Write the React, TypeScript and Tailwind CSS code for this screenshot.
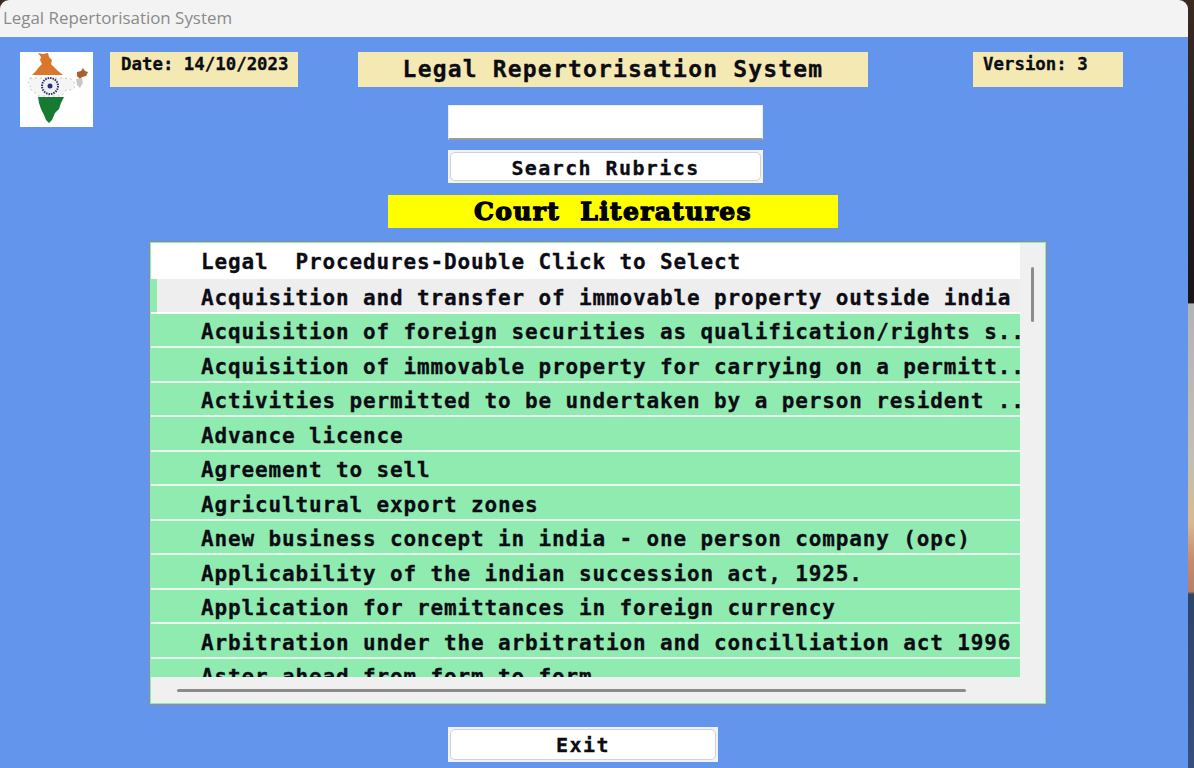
const rows = [
  "Acquisition of foreign securities as qualification/rights s..",
  "Acquisition of immovable property for carrying on a permitt..",
  "Activities permitted to be undertaken by a person resident ..",
  "Advance licence",
  "Agreement to sell",
  "Agricultural export zones",
  "Anew business concept in india - one person company (opc)",
  "Applicability of the indian succession act, 1925.",
  "Application for remittances in foreign currency",
  "Arbitration under the arbitration and concilliation act 1996",
  "Aster ahead from form to form",
];

const mono = "font-['DejaVu_Sans_Mono',monospace] font-bold text-[#0c0c14] whitespace-pre [-webkit-text-stroke:0.3px_#0c0c14]";

function IndiaLogo() {
  return (
    <div className="w-[73px] h-[75px] bg-white shrink-0">
      <svg width="73" height="75" viewBox="0 0 73 75" className="blur-[0.5px]">
        {/* north, saffron */}
        <path d="M18 1l5 1 5-1 1 4 3 3-1 4 3 3 4 4 5 4H12l4-4 3-4 3-3-2-4 1-3z" fill="#d9772a" />
        <path d="M57 20l4-1 2-3 2 3 3 1-2 4-4 1-2 2-3-3z" fill="#a8602f" />
        {/* middle, white with grey speckle */}
        <path d="M10 26h33l8 1 3 3 1 5-4 3-4-1-3 4-3 3H18l-4-4-5-4 2-3-3-3 2-2z" fill="#f5f5f5" stroke="#c4c4c4" strokeDasharray="2 3" />
        <path d="M56 27l6-1 1 5-3 5-3-3z" fill="#c8c8c8" />
        {/* south, green */}
        <path d="M18 45h26l-3 6-2 6-4 4-3 7-3 3-3-3-2-5-3-6-2-6z" fill="#167a33" />
        {/* chakra */}
        <circle cx="30" cy="34" r="8" fill="#eeeef5" stroke="#27306e" strokeWidth="2" strokeDasharray="1.5 1" />
        <circle cx="30" cy="34" r="2.5" fill="#27306e" />
      </svg>
    </div>
  );
}

function RaisedButton({ label, className, labelClass }: { label: string; className: string; labelClass?: string }) {
  return (
    <div className={`bg-[#f2f2f2] p-[2px] ${className}`}>
      <div className={`h-full bg-white border border-[#d2d2d2] rounded-[5px] flex items-center justify-center text-[20px] tracking-[1.4px] ${mono} ${labelClass ?? ""}`}>
        {label}
      </div>
    </div>
  );
}

export default function App() {
  return (
    <div className="h-[768px] w-[1194px] overflow-hidden bg-[linear-gradient(to_bottom,#3a2a20_0%,#1a1512_39.4%,#b4b4b4_39.6%,#c5bfb0_60%,#dcb98a_68%,#c98a6a_73%,#b98060_77%,#2e4468_77.4%,#35507f_100%)]">
      <div className="w-[1188px] h-[768px] flex flex-col rounded-t-[9px] overflow-hidden">
        <div className="h-[37px] pb-[2px] bg-[#f3f3f3] flex items-center pl-[3px] text-[16.9px] text-[#8a8a8a] font-['Open_Sans',sans-serif] shrink-0">
          Legal Repertorisation System
        </div>

        <div className="flex-1 bg-[#6495ed] pt-[15px] pl-[20px] flex">
          <IndiaLogo />

          <div className="ml-[17px] flex flex-col items-start">
            {/* top strip */}
            <div className="flex items-start">
              <div className={`w-[188px] h-[35px] bg-[#f5e9b3] pl-[11px] pt-[1px] text-[17.4px] leading-[22px] ${mono}`}>
                Date: 14/10/2023
              </div>
              <div className={`ml-[60px] w-[510px] h-[35px] bg-[#f5e9b3] flex items-center justify-center text-[23px] tracking-[1.18px] ${mono}`}>
                Legal Repertorisation System
              </div>
              <div className={`ml-[105px] w-[150px] h-[35px] bg-[#f5e9b3] pl-[10px] pt-[1px] text-[17.4px] leading-[22px] ${mono}`}>
                Version: 3
              </div>
            </div>

            <div className="ml-[338px] mt-[18px] w-[315px] h-[35px] bg-white border border-[#ececec] border-b-2 border-b-[#9a9a9a]" />
            <RaisedButton label="Search Rubrics" labelClass="pt-[2px]" className="ml-[338px] mt-[10px] w-[315px] h-[33px]" />

            <div className="ml-[278px] mt-[12px] w-[450px] h-[33px] bg-[#ffff00] flex items-center justify-center text-[25px] text-black font-['DejaVu_Serif',serif] font-bold [-webkit-text-stroke:1.3px_black] whitespace-pre tracking-[1.35px]">
              Court  Literatures
            </div>

            {/* list box */}
            <div className="ml-[39px] mt-[13px] w-[898px] h-[464px] bg-[#f0f0f0] border border-[#8a8f95]">
              <div className="border border-[#90ebb0] h-full flex flex-col">
                <div className="flex h-[434px]">
                  <div className="w-[869px] overflow-hidden bg-white">
                    <div className={`h-[36px] pl-[50px] pt-[4px] flex items-center text-[21px] tracking-[0.86px] ${mono}`}>
                      Legal  Procedures-Double Click to Select
                    </div>
                    <div className="h-[34.5px] flex bg-[#eeeeee] border-b-2 border-white">
                      <div className="w-[6px] bg-[#90ebb0]" />
                      <div className={`pl-[44px] pt-[6px] flex items-center text-[21px] tracking-[0.86px] ${mono}`}>
                        Acquisition and transfer of immovable property outside india
                      </div>
                    </div>
                    {rows.map((row) => (
                      <div
                        key={row}
                        className={`h-[34.5px] bg-[#90ebb0] border-b-2 border-[#e8f8ee] pl-[50px] pt-[6px] flex items-center overflow-hidden text-[21px] tracking-[0.86px] ${mono}`}
                      >
                        {row}
                      </div>
                    ))}
                  </div>
                  {/* vertical scrollbar */}
                  <div className="flex-1 pt-[24px] flex justify-center">
                    <div className="w-[3px] h-[55px] bg-[#8b8b8b] rounded-full" />
                  </div>
                </div>
                {/* horizontal scrollbar */}
                <div className="flex-1 pl-[26px] pt-[12px]">
                  <div className="w-[789px] h-[3px] bg-[#8b8b8b] rounded-full" />
                </div>
              </div>
            </div>

            <RaisedButton label="Exit" className="ml-[338px] mt-[22px] w-[270px] h-[35px]" />
          </div>
        </div>
      </div>
    </div>
  );
}
